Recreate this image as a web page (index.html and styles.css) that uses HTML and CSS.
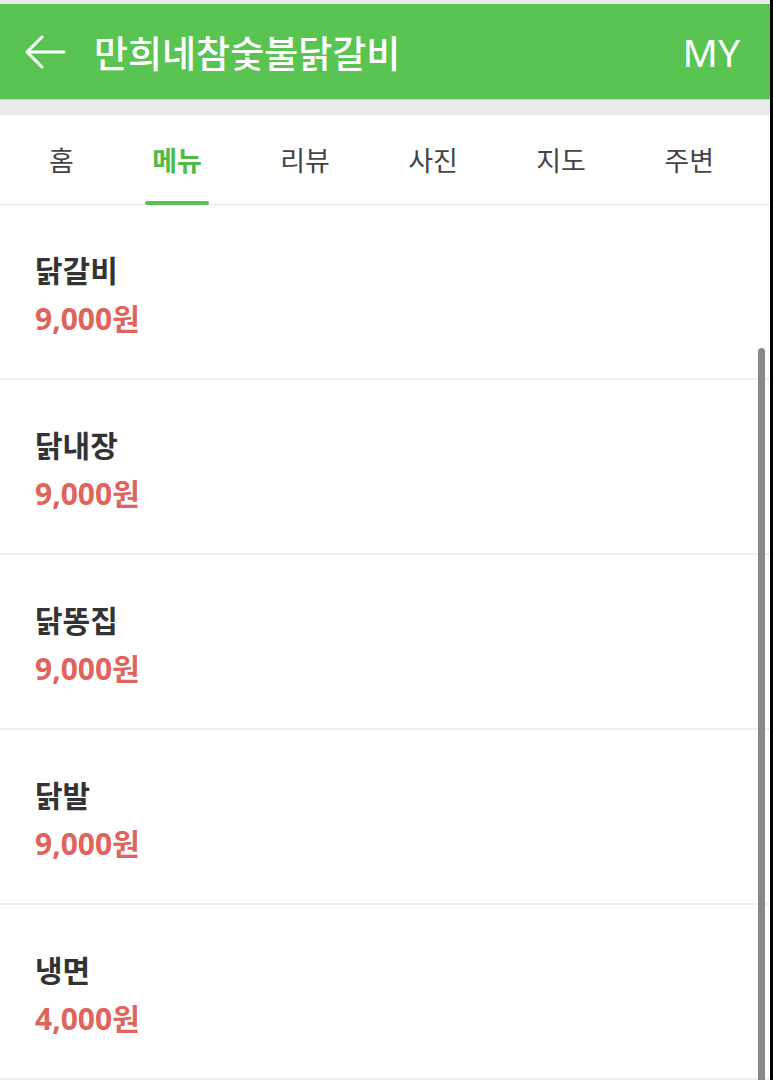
FILE: index.html
```html
<!DOCTYPE html>
<html lang="ko">

<head>
    <meta charset="UTF-8">
    <title>만희네참숯불닭갈비</title>
    <link rel="stylesheet" href="styles.css">
</head>

<body>

    <div class="page">
        <header class="topbar">
            <svg class="back" width="42" height="36" viewBox="0 0 42 36">
                <path d="M40 18 H4 M18 3 L3 18 L18 33" fill="none" stroke="#fff" stroke-width="3" stroke-linecap="round" stroke-linejoin="round" />
            </svg>
            <h1 class="title">만희네참숯불닭갈비</h1>
            <span class="my">MY</span>
        </header>

        <div class="gap"></div>

        <nav class="tabs">
            <a class="tab">홈</a>
            <a class="tab valgt">메뉴</a>
            <a class="tab">리뷰</a>
            <a class="tab">사진</a>
            <a class="tab">지도</a>
            <a class="tab">주변</a>
        </nav>

        <section class="menu">
            <article class="item">
                <h2>닭갈비</h2>
                <p class="pris">9,000원</p>
            </article>
            <article class="item">
                <h2>닭내장</h2>
                <p class="pris">9,000원</p>
            </article>
            <article class="item">
                <h2>닭똥집</h2>
                <p class="pris">9,000원</p>
            </article>
            <article class="item">
                <h2>닭발</h2>
                <p class="pris">9,000원</p>
            </article>
            <article class="item">
                <h2>냉면</h2>
                <p class="pris">4,000원</p>
            </article>
        </section>

        <div class="scrollbar"></div>
    </div>

</body>

</html>
```

FILE: styles.css
```css
body {
    margin: 0;
    background-color: #000;
    font-family: "Noto Sans CJK KR", "Noto Sans", sans-serif;
}

.page {
    position: relative;
    width: 770px;
    height: 1080px;
    overflow: hidden;
    background-color: #fff;
    border-top: 4px solid #e9eaec;
    box-sizing: border-box;
}

.topbar {
    display: flex;
    align-items: center;
    height: 95px;
    padding: 0 30px 0 24px;
    background-color: #5ac452;
    border-bottom: 1px solid #bfe7ba;
    color: #fff;
}

.back {
    flex: none;
    margin-right: 28px;
}

.title {
    flex: 1;
    margin: 0;
    font-size: 37px;
    font-weight: 500;
}

.my {
    font-family: "Noto Sans", sans-serif;
    font-size: 39px;
}

.gap {
    height: 15px;
    background-color: #e9eaec;
}

.tabs {
    display: flex;
    justify-content: space-between;
    height: 89px;
    padding: 0 56px 0 49px;
    border-bottom: 1px solid #e4e4e4;
}

.tab {
    display: flex;
    align-items: center;
    position: relative;
    font-size: 27px;
    color: #444;
}

.tab.valgt {
    color: #4dbb45;
    font-weight: 700;
}

.tab.valgt::after {
    content: "";
    position: absolute;
    left: -7px;
    right: -7px;
    bottom: -1px;
    height: 4px;
    border-radius: 2px;
    background-color: #5ac452;
}

.item {
    height: 175px;
    padding: 44px 35px 0;
    box-sizing: border-box;
    border-bottom: 2px solid #efefef;
}

.item h2 {
    margin: 0;
    font-size: 30px;
    line-height: 40px;
    font-weight: 700;
    color: #333;
}

.pris {
    margin: 10px 0 0;
    font-family: "Noto Sans", "Noto Sans CJK KR", sans-serif;
    font-size: 30px;
    line-height: 40px;
    font-weight: 700;
    color: #e0645c;
}

.scrollbar {
    position: absolute;
    top: 344px;
    right: 5px;
    width: 7px;
    height: 760px;
    border-radius: 4px;
    background-color: #888;
}
```
